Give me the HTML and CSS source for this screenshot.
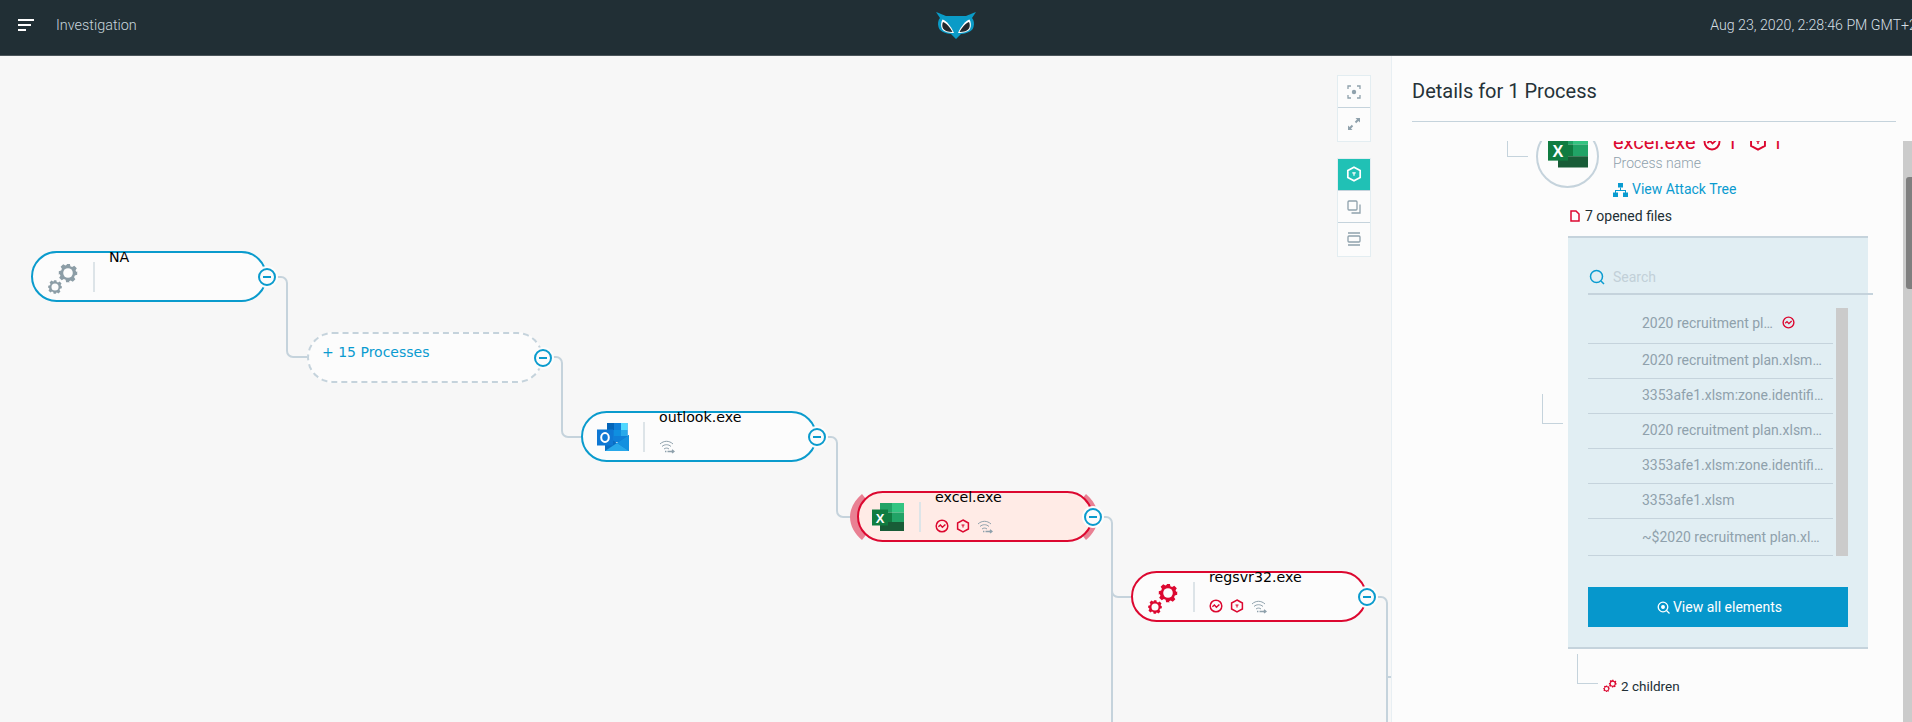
FILE: index.html
```html
<!DOCTYPE html>
<html>
<head>
    <title>Investigation</title>
    <link rel="stylesheet" href="styles.css">
</head>
<body>
    <svg class="defs" width="0" height="0">
        <defs>
            <g id="gear">
                <path d="M-2-10h4l.6 2.6 1.9.8 2.3-1.4 2.8 2.8-1.4 2.3.8 1.9L10-2v4l-2.6.6-.8 1.9 1.4 2.3-2.8 2.8-2.3-1.4-1.9.8L2 10h-4l-.6-2.6-1.9-.8-2.3 1.4-2.8-2.8 1.4-2.3-.8-1.9L-10 2v-4l2.6-.6.8-1.9-1.4-2.3 2.8-2.8 2.3 1.4 1.9-.8z"/>
                <circle r="5.200" fill="#fcfcfc"/>
            </g>
            <g id="excel-logo">
                <rect x="8" y="0" width="12" height="9.500" fill="#21a366"/>
                <rect x="20" y="0" width="12" height="9.500" fill="#33c481"/>
                <rect x="8" y="9.500" width="12" height="9.500" fill="#107c41"/>
                <rect x="20" y="9.500" width="12" height="9.500" fill="#21a366"/>
                <rect x="8" y="19" width="24" height="9" fill="#185c37"/>
                <rect x="0" y="6.500" width="16" height="16" fill="#107c41"/>
                <text x="8" y="19.500" class="logo-letter">X</text>
            </g>
            <g id="activity">
                <circle cx="7" cy="7" r="5.800" fill="none" stroke="currentColor" stroke-width="1.500"/>
                <path d="M3.400 7.800l2-1.800 2 2.200 3-2.800" fill="none" stroke="currentColor" stroke-width="1.400"/>
            </g>
            <g id="hex">
                <path d="M7 1l5.400 3v6L7 13 1.600 10V4z" fill="none" stroke="currentColor" stroke-width="1.500"/>
                <path d="M5.500 6h3M7 6v2.500" fill="none" stroke="currentColor" stroke-width="1.100"/>
            </g>
            <g id="wifi">
                <path d="M1 5c3.800-3.600 9.200-3.600 13 0M3 7.500c2.600-2.400 6.400-2.400 9 0M5 10c1.500-1.200 3.500-1.200 5 0" fill="none" stroke="#8fa1ac" stroke-width="1"/>
                <path d="M6 12.500h1.400M8.500 12.500h6M13 10.800l2 1.700-2 1.500" fill="none" stroke="#8fa1ac" stroke-width="1.300"/>
            </g>
        </defs>
    </svg>

    <header class="topbar">
        <div class="topbar-left">
            <div class="menu-icon"><span></span><span></span><span></span></div>
            <span class="page-name">Investigation</span>
        </div>
        <svg class="owl" width="40" height="27" viewBox="0 0 40 27">
            <path d="M0 0C6 2 9 4 11 4H29C31 4 34 2 40 0L36 6C38 8 38.500 12 37.500 15 36.500 19 32 21.500 25 22L20 27 15 22C8 21.500 3.500 19 2.500 15 1.500 12 2 8 4 6z" fill="#0a9bc7"/>
            <path d="M6.500 7.500C10 8.500 15 14 18 21 13 21 8 20 6 17 4.500 14 5 10 6.500 7.500z" fill="#fff"/>
            <path d="M33.500 7.500C30 8.500 25 14 22 21 27 21 32 20 34 17 35.500 14 35 10 33.500 7.500z" fill="#fff"/>
            <path d="M7 10C10 11 14 15 16.500 20 12 20 8.500 19 7 16.500 6 14.500 6 12 7 10z" fill="#23282c"/>
            <path d="M33 10C30 11 26 15 23.500 20 28 20 31.500 19 33 16.500 34 14.500 34 12 33 10z" fill="#23282c"/>
        </svg>
        <span class="clock">Aug 23, 2020, 2:28:46 PM GMT+2</span>
    </header>

    <main class="workspace">
        <section class="canvas">
            <svg class="links" width="1391" height="666">
                <path d="M276 221h5a6 6 0 0 1 6 6v68a6 6 0 0 0 6 6h14"/>
                <path d="M553 301h3a6 6 0 0 1 6 6v68a6 6 0 0 0 6 6h13"/>
                <path d="M826 381h5a6 6 0 0 1 6 6v68a6 6 0 0 0 6 6h14"/>
                <path d="M1103 461h3a6 6 0 0 1 6 6v68a6 6 0 0 0 6 6h13M1112 530v136"/>
                <path d="M1378 541h3a6 6 0 0 1 6 6v119M1387 621h4"/>
                <path class="halo" d="M862 438c-7 6-12 14-12 23s5 17 12 23l4-5c-4-5-6-11-6-18s2-13 6-18z"/>
                <path class="halo" d="M1086 438c7 6 12 14 12 23s-5 17-12 23l-4-5c4-5 6-11 6-18s-2-13-6-18z"/>
            </svg>

            <div class="node node-na">
                <svg class="node-icon gears" width="36" height="32" viewBox="0 0 36 32">
                    <use href="#gear" transform="translate(23 9) scale(.92)"/>
                    <use href="#gear" transform="translate(10 23) scale(.68)"/>
                </svg>
                <div class="node-body"><span class="node-name">NA</span></div>
                <span class="toggle"></span>
            </div>

            <div class="node node-group">
                <span class="group-label">+ 15 Processes</span>
                <span class="toggle"></span>
            </div>

            <div class="node node-outlook">
                <svg class="node-icon" width="32" height="28" viewBox="0 0 32 28">
                    <rect x="10" y="0" width="20.500" height="19" fill="#0f7fd8"/>
                    <rect x="10" y="0" width="7" height="7" fill="#0364b8"/>
                    <rect x="24" y="0" width="6.500" height="7" fill="#4fd8ff"/>
                    <rect x="17" y="7" width="7" height="6" fill="#0f8fe0"/>
                    <rect x="24" y="7" width="6.500" height="6" fill="#28a8ea"/>
                    <path d="M8 12l12 8 12-8v16H8z" fill="#0a6dc2"/>
                    <path d="M32 12v16L20 20z" fill="#1490df"/>
                    <path d="M8 28l12-8 12 8z" fill="#28a8ea"/>
                    <rect x="0" y="6.500" width="16" height="16" fill="#0f78d4"/>
                    <ellipse cx="8" cy="14.500" rx="3.800" ry="4.400" fill="none" stroke="#fff" stroke-width="2"/>
                </svg>
                <div class="node-body">
                    <span class="node-name">outlook.exe</span>
                    <div class="node-flags">
                        <svg width="16" height="15" viewBox="0 0 16 15"><use href="#wifi"/></svg>
                    </div>
                </div>
                <span class="toggle"></span>
            </div>

            <div class="node node-excel bad">
                <svg class="node-icon" width="32" height="28" viewBox="0 0 32 28"><use href="#excel-logo"/></svg>
                <div class="node-body">
                    <span class="node-name">excel.exe</span>
                    <div class="node-flags red">
                        <svg width="14" height="14" viewBox="0 0 14 14"><use href="#activity"/></svg>
                        <svg width="14" height="14" viewBox="0 0 14 14"><use href="#hex"/></svg>
                        <svg width="16" height="15" viewBox="0 0 16 15"><use href="#wifi"/></svg>
                    </div>
                </div>
                <span class="toggle"></span>
            </div>

            <div class="node node-reg bad">
                <svg class="node-icon gears" width="36" height="32" viewBox="0 0 36 32">
                    <use href="#gear" transform="translate(23 9) scale(.92)"/>
                    <use href="#gear" transform="translate(10 23) scale(.68)"/>
                </svg>
                <div class="node-body">
                    <span class="node-name">regsvr32.exe</span>
                    <div class="node-flags red">
                        <svg width="14" height="14" viewBox="0 0 14 14"><use href="#activity"/></svg>
                        <svg width="14" height="14" viewBox="0 0 14 14"><use href="#hex"/></svg>
                        <svg width="16" height="15" viewBox="0 0 16 15"><use href="#wifi"/></svg>
                    </div>
                </div>
                <span class="toggle"></span>
            </div>

            <div class="tools">
                <div class="tool-group">
                    <button class="tool">
                        <svg width="14" height="14" viewBox="0 0 14 14" fill="none" stroke="currentColor" stroke-width="1.300"><path d="M1 4V1h3M10 1h3v3M13 10v3h-3M4 13H1v-3"/><circle cx="7" cy="7" r="2.200" fill="currentColor" stroke="none"/></svg>
                    </button>
                    <button class="tool">
                        <svg width="14" height="14" viewBox="0 0 14 14" fill="currentColor"><path d="M8.500 1H13v4.500L11.400 4 9.200 6.200 7.800 4.800 10 2.600zM5.500 13H1V8.500L2.600 10l2.200-2.200 1.400 1.400L4 11.400z"/></svg>
                    </button>
                </div>
                <div class="tool-group">
                    <button class="tool on">
                        <svg width="16" height="16" viewBox="0 0 14 14"><use href="#hex"/></svg>
                    </button>
                    <button class="tool">
                        <svg width="14" height="14" viewBox="0 0 14 14" fill="none" stroke="currentColor" stroke-width="1.300"><rect x="1" y="1" width="9" height="9" rx="1"/><path d="M13 4.500V13H4.500"/></svg>
                    </button>
                    <button class="tool">
                        <svg width="14" height="14" viewBox="0 0 14 14" fill="none" stroke="currentColor" stroke-width="1.300"><path d="M1 1h12M1 13h12"/><rect x="1" y="4" width="12" height="6" rx="1"/></svg>
                    </button>
                </div>
            </div>
        </section>

        <aside class="panel">
            <h2 class="panel-title">Details for 1 Process</h2>
            <div class="panel-scroll">
                <div class="panel-content">
                    <span class="elbow elbow-a"></span>
                    <span class="elbow elbow-b"></span>
                    <span class="elbow elbow-c"></span>

                    <div class="process">
                        <div class="process-logo">
                            <svg width="40" height="36" viewBox="0 0 32 28"><use href="#excel-logo"/></svg>
                        </div>
                        <div class="process-info">
                            <div class="process-title">
                                <span>excel.exe</span>
                                <svg width="18" height="18" viewBox="0 0 14 14"><use href="#activity"/></svg>
                                <span class="count">1</span>
                                <svg width="18" height="18" viewBox="0 0 14 14"><use href="#hex"/></svg>
                                <span class="count">1</span>
                            </div>
                            <div class="process-sub">Process name</div>
                            <a class="tree-link">
                                <svg width="15" height="14" viewBox="0 0 15 14" fill="currentColor"><rect x="5" y="0" width="5" height="4.500"/><rect x="0" y="9.500" width="5" height="4.500"/><rect x="10" y="9.500" width="5" height="4.500"/><path d="M7 4.500h1V7h5v3h-1V8H3v2H2V7h5z"/></svg>
                                View Attack Tree
                            </a>
                        </div>
                    </div>

                    <div class="files-head">
                        <svg width="10" height="12" viewBox="0 0 10 12" fill="none" stroke="#dc0830" stroke-width="1.500"><path d="M1 1h5l3 3v7H1z"/></svg>
                        7 opened files
                    </div>

                    <div class="files-box">
                        <div class="search">
                            <svg width="16" height="16" viewBox="0 0 16 16" fill="none" stroke="#0a9bd0" stroke-width="1.500"><circle cx="7.500" cy="7.500" r="6"/><path d="M12 12l3 3"/></svg>
                            <span>Search</span>
                        </div>
                        <div class="file-area">
                            <ul class="files">
                                <li class="first">
                                    <span class="file-name short">2020 recruitment plan.xlsm</span>
                                    <svg width="13" height="13" viewBox="0 0 14 14" class="red"><use href="#activity"/></svg>
                                </li>
                                <li><span class="file-name">2020 recruitment plan.xlsm~RF2e.TMP</span></li>
                                <li><span class="file-name">3353afe1.xlsm:zone.identifier</span></li>
                                <li><span class="file-name">2020 recruitment plan.xlsm~RF2e.TMP</span></li>
                                <li><span class="file-name">3353afe1.xlsm:zone.identifier</span></li>
                                <li><span class="file-name">3353afe1.xlsm</span></li>
                                <li class="last"><span class="file-name">~$2020 recruitment plan.xlsm</span></li>
                            </ul>
                            <div class="file-scrollbar"></div>
                        </div>
                        <button class="view-all">
                            <svg width="13" height="13" viewBox="0 0 13 13" fill="none" stroke="#fff" stroke-width="1.300"><circle cx="6" cy="6" r="4.800"/><circle cx="6" cy="6" r="1.300" fill="#fff"/><path d="M9.500 9.500l3 3"/></svg>
                            View all elements
                        </button>
                    </div>

                    <div class="children">
                        <svg class="red" width="14" height="14" viewBox="0 0 36 32"><use href="#gear" transform="translate(25 10) scale(.98)"/><use href="#gear" transform="translate(9 23) scale(.82)"/></svg>
                        2 children
                    </div>
                </div>
                <div class="panel-scrollbar"><div class="panel-thumb"></div></div>
            </div>
        </aside>
    </main>
</body>
</html>
```

FILE: styles.css
```css
* {
    box-sizing: border-box;
}
html, body {
    margin: 0;
    padding: 0;
    height: 722px;
    overflow: hidden;
}
body {
    font-family: Roboto, "Liberation Sans", sans-serif;
    font-size: 14px;
    color: #212f35;
    background: #f7f7f7;
}
.defs {
    display: block;
    height: 0;
}
.logo-letter {
    font-family: "Liberation Sans", sans-serif;
    font-size: 13px;
    font-weight: 700;
    fill: #fff;
    text-anchor: middle;
}
.red {
    color: #dc0830;
    fill: #dc0830;
}

/* top bar */
.topbar {
    height: 56px;
    background: #212f35;
    border-bottom: 1px solid #4c565b;
    display: grid;
    grid-template-columns: 1fr auto 1fr;
    align-items: center;
    overflow: hidden;
    font-size: 14.4px;
}
.topbar-left {
    display: flex;
    align-items: center;
    padding-left: 18px;
    margin-top: -5px;
}
.menu-icon {
    width: 16px;
    margin-right: 22px;
    display: flex;
    flex-direction: column;
    gap: 3px;
}
.menu-icon span {
    display: block;
    height: 2px;
    background: #fff;
}
.menu-icon span:nth-child(2) {
    width: 13px;
}
.menu-icon span:nth-child(3) {
    width: 8px;
}
.page-name {
    font-weight: 300;
    color: #c9d6dd;
}
.owl {
    display: block;
    margin-top: -5px;
}
.clock {
    justify-self: end;
    margin-right: -5px;
    margin-top: -5px;
    white-space: nowrap;
    font-size: 14.2px;
    color: #d5dfe4;
    font-weight: 300;
}

/* layout */
.workspace {
    display: flex;
    height: 666px;
}
.canvas {
    position: relative;
    width: 1391px;
    flex: none;
    overflow: hidden;
    background: #f7f7f7;
}
.links {
    position: absolute;
    left: 0;
    top: 0;
}
.links path {
    fill: none;
    stroke: #c5d3dc;
    stroke-width: 2;
}
.links .halo {
    fill: #e98093;
    stroke: none;
}

/* nodes */
.node {
    position: absolute;
    width: 236px;
    height: 51px;
    border: 2px solid #0a9bcd;
    border-radius: 26px;
    background: #fcfcfc;
    font-family: "DejaVu Sans", sans-serif;
    font-size: 14.2px;
    color: #000;
}
.node.bad {
    border-color: #dc0830;
}
.node-na { left: 31px; top: 195px; }
.node-group { left: 307px; top: 276px; border: 2px dashed #c5d3dc; font-size: 14px; }
.node-outlook { left: 581px; top: 355px; }
.node-excel { left: 857px; top: 435px; background: #ffebe6; }
.node-reg { left: 1131px; top: 515px; }
.node-icon {
    position: absolute;
    left: 14px;
    top: 10px;
}
.node-excel .node-icon {
    left: 13px;
}
.gears {
    left: 12px;
    top: 11px;
    fill: #8c9da6;
}
.bad .gears {
    left: 12px;
    fill: #dc0830;
}
.node-body {
    position: absolute;
    left: 60px;
    top: 9px;
    height: 30px;
    border-left: 2px solid #dde4e8;
    padding-left: 14px;
    white-space: nowrap;
}
.node-name {
    display: block;
    line-height: 16px;
    margin-top: -13px;
}
.node-flags {
    display: flex;
    align-items: center;
    gap: 7px;
    margin-top: 13px;
    height: 16px;
}
.group-label {
    display: block;
    padding: 10px 0 0 13px;
    color: #0a9bd0;
    line-height: 16px;
}
.toggle {
    position: absolute;
    right: -11px;
    top: 15px;
    width: 18px;
    height: 18px;
    border: 2px solid #0a9bcd;
    border-radius: 50%;
    background: #fcfcfc;
    box-shadow: 0 0 0 2px #fcfcfc;
}
.toggle::after {
    content: "";
    position: absolute;
    left: 3px;
    right: 3px;
    top: 6px;
    height: 2px;
    background: #0a9bcd;
}

/* toolbar over the canvas */
.tools {
    position: absolute;
    left: 1337px;
    top: 19px;
    display: flex;
    flex-direction: column;
    gap: 16px;
}
.tool-group {
    display: flex;
    flex-direction: column;
    border: 1px solid #e3edf1;
    background: #fcfcfc;
}
.tool {
    display: flex;
    align-items: center;
    justify-content: center;
    width: 32px;
    height: 32.33px;
    padding: 0;
    border: 0;
    border-bottom: 1px solid #c5d3dc;
    background: transparent;
    color: #8fa1ac;
}
.tool:last-child {
    border-bottom: 0;
}
.tool.on {
    background: #20c1b5;
    color: #fff;
}

/* details panel */
.panel {
    flex: 1;
    border-left: 1px solid #e8eff3;
    background: #fcfcfc;
    display: flex;
    flex-direction: column;
    min-width: 0;
}
.panel-title {
    margin: 0 16px 0 20px;
    height: 66px;
    padding-top: 22px;
    border-bottom: 1px solid #c5d3dc;
    font-size: 20px;
    line-height: 26px;
    font-weight: 400;
    color: #263238;
}
.panel-scroll {
    display: flex;
    margin-top: 19px;
    height: 581px;
    overflow: hidden;
}
.panel-content {
    position: relative;
    flex: 1;
    min-width: 0;
}
.panel-scrollbar {
    width: 9px;
    flex: none;
    background: #cbcbcb;
    padding: 36px 0 0 3px;
}
.panel-thumb {
    height: 112px;
    background: #7f7f7f;
    border-radius: 3px 0 0 3px;
}
.elbow {
    position: absolute;
    border-left: 1px solid #c5d3dc;
    border-bottom: 1px solid #c5d3dc;
    width: 21px;
    height: 30px;
}
.elbow-a { left: 115px; top: -14px; }
.elbow-b { left: 150px; top: 253px; }
.elbow-c { left: 185px; top: 513px; }

.process {
    display: flex;
    margin: -16px 0 0 144px;
}
.process-logo {
    width: 63px;
    height: 63px;
    flex: none;
    border: 2px solid #c5d3dc;
    border-radius: 50%;
    padding: 5px 0 0 10px;
}
.process-logo svg {
    display: block;
}
.process-info {
    margin: 5px 0 0 14px;
}
.process-title {
    display: flex;
    align-items: center;
    gap: 8px;
    height: 24px;
    font-size: 20px;
    color: #dc0830;
}
.process-title .count {
    margin: 0 3px 0 -3px;
}
.process-sub {
    margin-top: 1px;
    line-height: 16px;
    font-weight: 300;
    color: #8fa1ac;
}
.tree-link {
    display: flex;
    align-items: center;
    gap: 4px;
    margin-top: 10px;
    line-height: 17px;
    color: #0a9bd0;
}
.files-head {
    display: flex;
    align-items: center;
    gap: 5px;
    margin: 10px 0 0 178px;
    line-height: 16px;
}
.files-box {
    width: 300px;
    height: 413px;
    margin: 12px 0 0 176px;
    padding: 0 20px;
    border-top: 2px solid #c5d3dc;
    border-bottom: 2px solid #c5d3dc;
    background: #e1eef3;
}
.search {
    display: flex;
    align-items: center;
    gap: 8px;
    width: 285px;
    height: 57px;
    padding: 22px 0 0 1px;
    border-bottom: 2px solid #c5d3dc;
    color: #c2d0d8;
}
.file-area {
    display: flex;
    gap: 3px;
    margin-top: 13px;
}
.files {
    list-style: none;
    margin: 0;
    padding: 0;
    width: 245px;
}
.files li {
    display: flex;
    align-items: center;
    gap: 8px;
    height: 35px;
    padding: 0 9px 2px 54px;
    border-bottom: 1px solid #c5d3dc;
    color: #8fa1ac;
}
.files li.first {
    height: 36px;
    padding-bottom: 6px;
}
.files li.last {
    height: 37px;
    padding-bottom: 1px;
}
.file-name {
    display: block;
    overflow: hidden;
    white-space: nowrap;
    text-overflow: ellipsis;
}
.file-name.short {
    max-width: 132px;
}
.file-scrollbar {
    width: 12px;
    background: #cbcbcb;
}
.view-all {
    display: flex;
    align-items: center;
    justify-content: center;
    gap: 3px;
    width: 260px;
    height: 40px;
    margin-top: 31px;
    border: 0;
    padding: 0 0 0 3px;
    background: #0697cc;
    color: #fff;
    font: 14px Roboto, sans-serif;
}
.children {
    display: flex;
    align-items: center;
    gap: 4px;
    margin: 29px 0 0 211px;
    line-height: 16px;
    font-size: 13.5px;
}
```
